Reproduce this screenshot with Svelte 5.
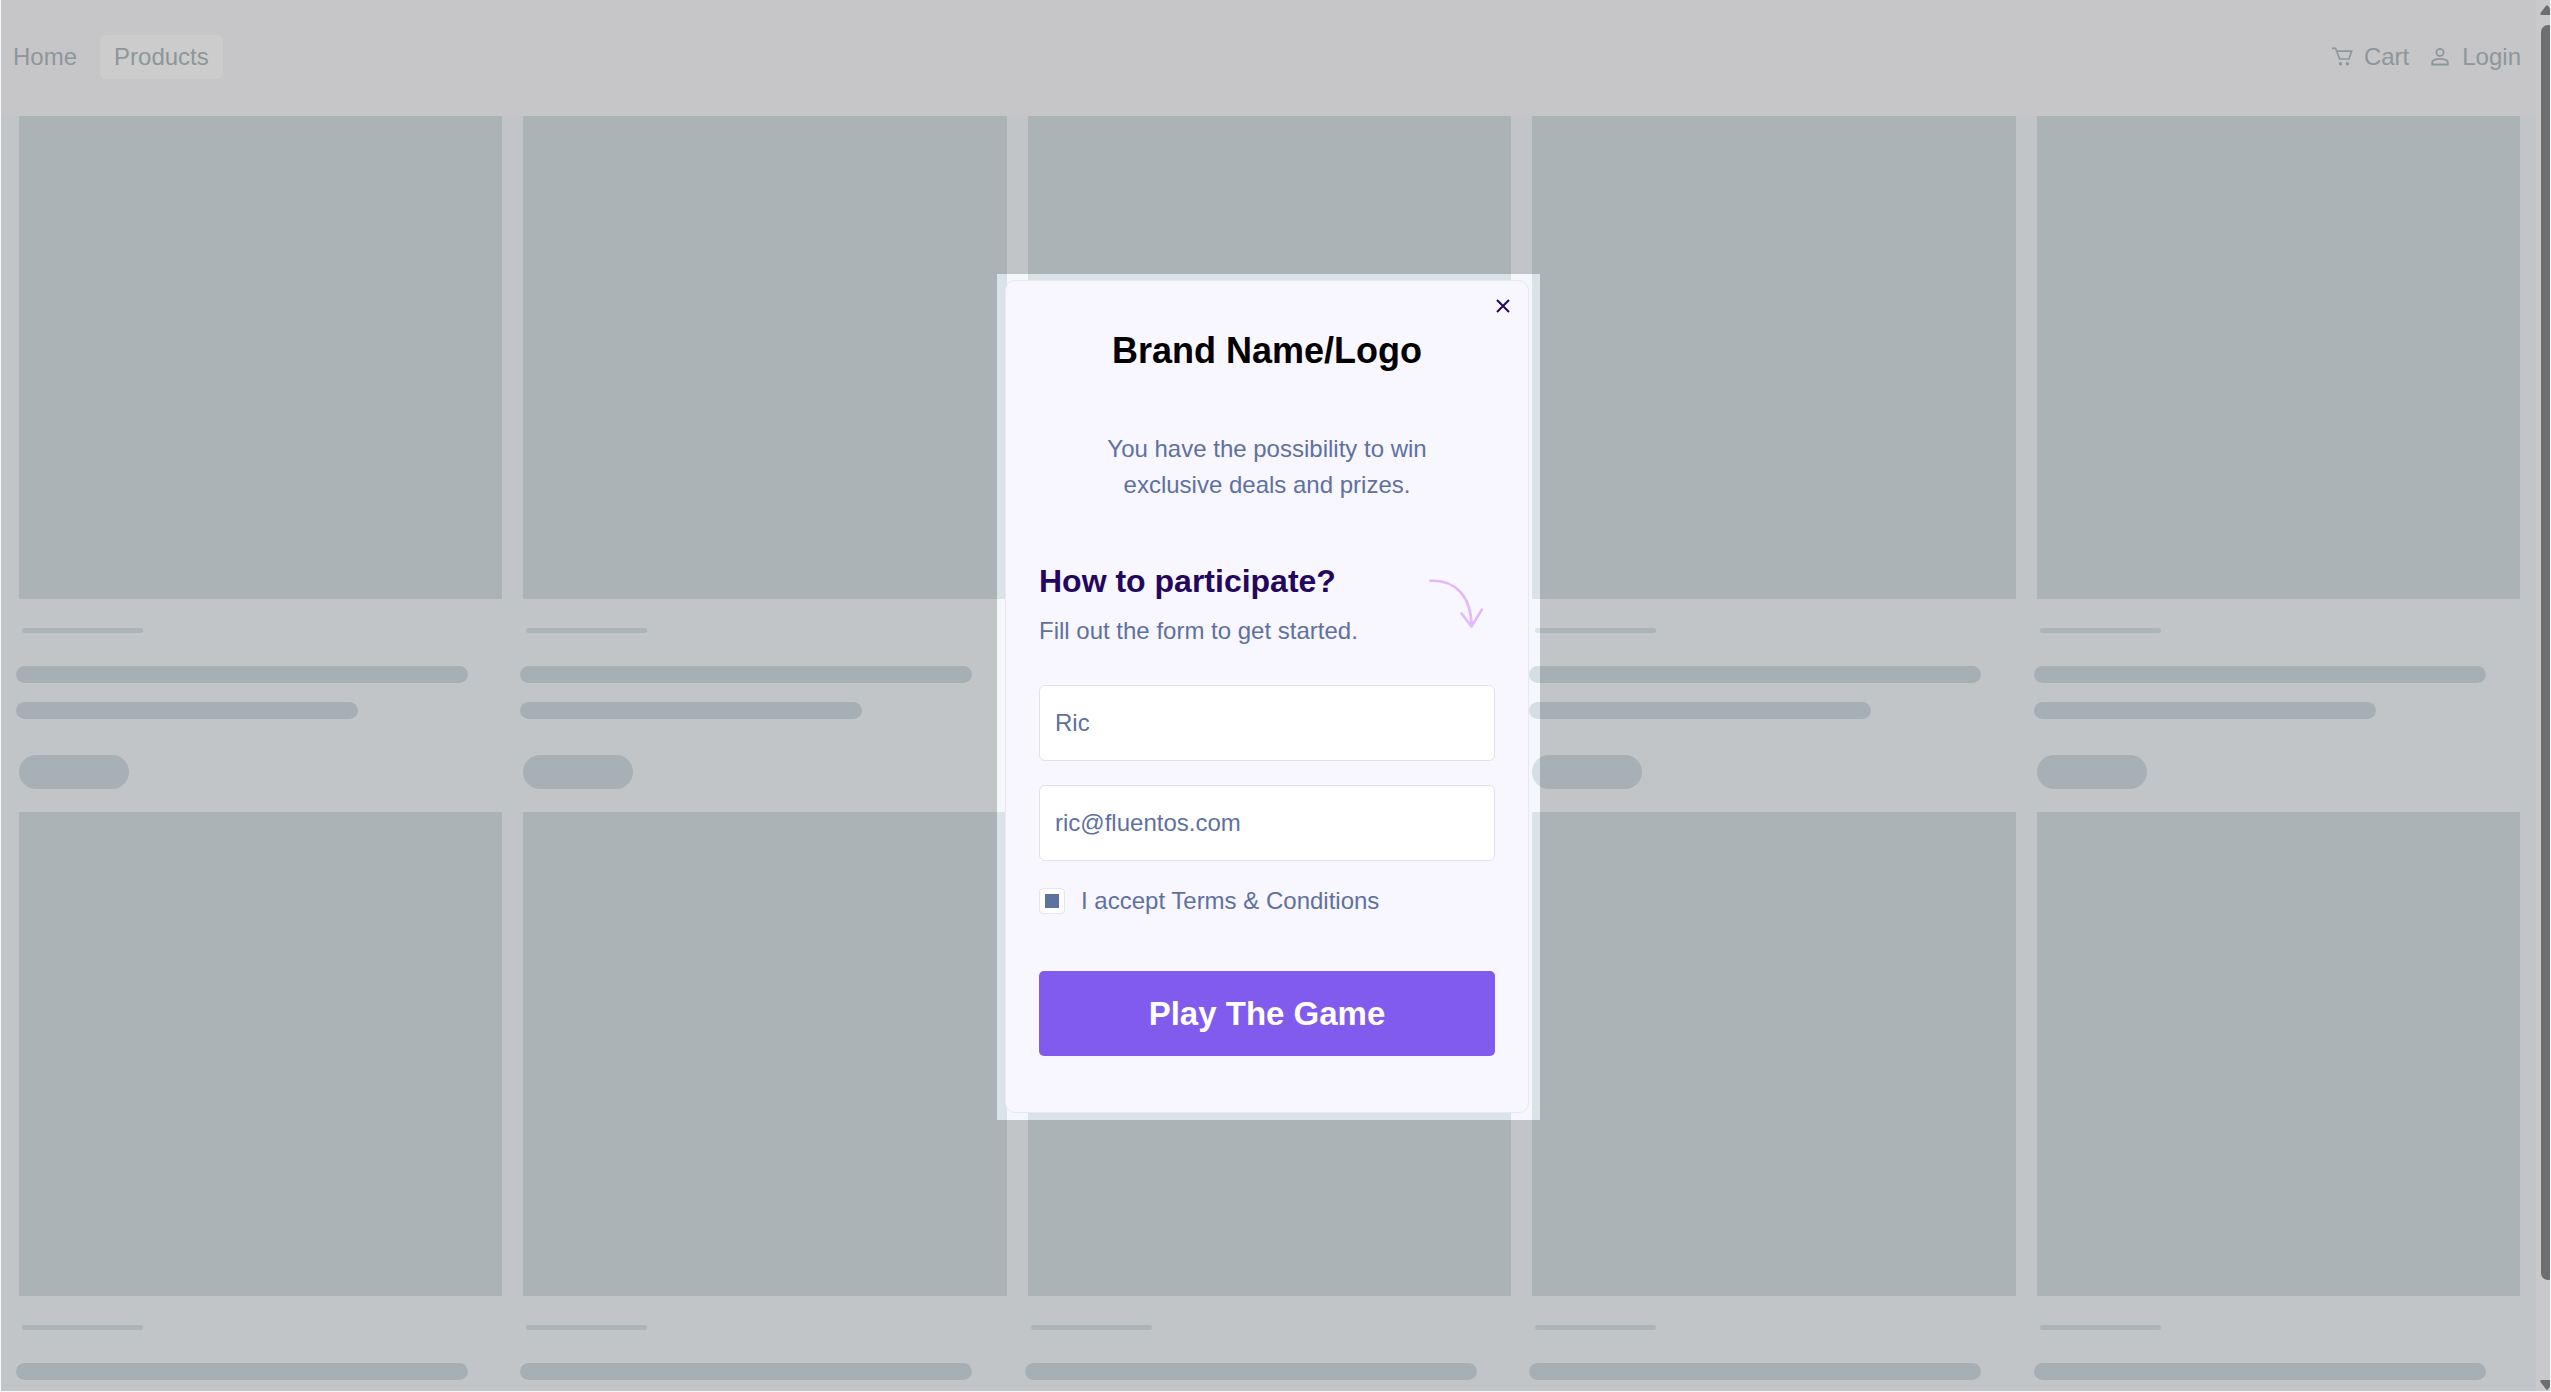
<script>
  let name = $state('Ric');
  let email = $state('ric@fluentos.com');
  let accepted = $state(true);
  let open = $state(true);
  const products = Array.from({ length: 10 }, (_, i) => i);
</script>

<div class="shell">
  <div class="page">
    <header class="bar">
      <nav class="links">
        <a class="link" href="#home">Home</a>
        <a class="link current" href="#products">Products</a>
      </nav>
      <nav class="account">
        <a class="link" href="#cart">
          <svg class="icon" viewBox="0 0 22 22" aria-hidden="true">
            <path d="M1 2.300h3.600l4 10.700h9.400L20.600 5.200H5.700" fill="none" stroke="currentColor" stroke-width="1.700" />
            <circle cx="9.500" cy="17.800" r="1.700" fill="currentColor" />
            <circle cx="16.500" cy="17.800" r="1.700" fill="currentColor" />
          </svg>
          Cart
        </a>
        <a class="link" href="#login">
          <svg class="icon" viewBox="0 0 22 22" aria-hidden="true">
            <circle cx="11" cy="6.400" r="3.600" fill="none" stroke="currentColor" stroke-width="1.800" />
            <path d="M3.200 18.500v-2c0-2.600 4.600-3.700 7.800-3.700s7.800 1.100 7.800 3.700v2z" fill="none" stroke="currentColor" stroke-width="1.800" />
          </svg>
          Login
        </a>
      </nav>
    </header>
    <main class="grid">
      {#each products as id (id)}
        <article class="product">
          <div class="photo"></div>
          <div class="tag"></div>
          <div class="line"></div>
          <div class="line short"></div>
          <div class="pill"></div>
        </article>
      {/each}
    </main>
  </div>

  <div class="scrollbar" aria-hidden="true">
    <svg class="arrow" viewBox="0 0 14 10"><path d="M6 .8q1-1.200 2 0l5.500 7.200q.7 2-1 2h-11q-1.700 0-1-2z" fill="#6e6e6e" /></svg>
    <div class="track"><div class="thumb"></div></div>
    <svg class="arrow" viewBox="0 0 14 10"><path d="M6 9.200q1 1.200 2 0l5.500-7.200q.7-2-1-2h-11q-1.700 0-1 2z" fill="#6e6e6e" /></svg>
  </div>

  {#if open}
    <div class="overlay">
      <div class="frame">
        <div class="dialog" role="dialog" aria-modal="true" aria-labelledby="brand">
          <button class="close" type="button" aria-label="Close" onclick={() => (open = false)}>
            <svg viewBox="0 0 14 14" aria-hidden="true">
              <path d="M1 1l12 12M13 1L1 13" stroke="currentColor" stroke-width="2" />
            </svg>
          </button>
          <h1 class="brand" id="brand">Brand Name/Logo</h1>
          <p class="intro">You have the possibility to win exclusive deals and prizes.</p>
          <div class="how">
            <div>
              <h2 class="title">How to participate?</h2>
              <p class="hint">Fill out the form to get started.</p>
            </div>
            <svg class="curve" viewBox="0 0 54 52" aria-hidden="true">
              <path
                d="M1.500 1.800C27 .5 42.500 18 42.500 47.500M32.500 34.500L42.500 47.500L53 30.500"
                fill="none"
                stroke="#e2bafb"
                stroke-width="2.600"
                stroke-linecap="round"
                stroke-linejoin="round"
              />
            </svg>
          </div>
          <form class="form" onsubmit={(e) => e.preventDefault()}>
            <input class="field" type="text" aria-label="Name" bind:value={name} />
            <input class="field" type="email" aria-label="Email" bind:value={email} />
            <label class="terms">
              <input class="tick" type="checkbox" bind:checked={accepted} />
              I accept Terms &amp; Conditions
            </label>
            <button class="play" type="submit">Play The Game</button>
          </form>
        </div>
      </div>
    </div>
  {/if}
</div>

<style>
  :global(body) {
    background: #f7f8fa;
    font-family: 'Liberation Sans', Arial, sans-serif;
  }

  .shell {
    box-sizing: border-box;
    position: relative;
    display: grid;
    grid-template-columns: 1fr 14px;
    height: 100vh;
    padding: 0 1px 1px;
    overflow: hidden;
    font-size: 24px;
    line-height: 36px;
  }

  .page {
    min-width: 0;
    overflow: hidden;
    background: #f3f7fb;
  }

  .bar {
    box-sizing: border-box;
    display: flex;
    justify-content: space-between;
    align-items: center;
    height: 116px;
    padding: 0 15px 2px 12px;
    background: #f8f8fa;
  }

  .links,
  .account {
    display: flex;
    align-items: center;
    gap: 23px;
  }

  .account {
    gap: 20px;
  }

  .link {
    display: flex;
    align-items: center;
    gap: 11px;
    color: #b0bdc2;
    text-decoration: none;
  }

  .current {
    padding: 4px 14px;
    border-radius: 6px;
    background: #ffffff;
  }

  .icon {
    width: 22px;
    height: 22px;
  }

  .grid {
    display: grid;
    grid-template-columns: repeat(5, 1fr);
    column-gap: 21px;
    padding: 0 16px 0 18px;
  }

  .product {
    padding-bottom: 23px;
  }

  .photo {
    aspect-ratio: 1;
    background: #d6e0e4;
  }

  .tag {
    width: 121px;
    height: 5px;
    margin: 29px 0 33px 3px;
    border-radius: 3px;
    background: #d9e1e5;
  }

  .line {
    width: 452px;
    height: 17px;
    margin: 0 0 19px -3px;
    border-radius: 9px;
    background: #d0dce2;
  }

  .short {
    width: 342px;
    margin-bottom: 36px;
  }

  .pill {
    width: 110px;
    height: 34px;
    border-radius: 17px;
    background: #d0dce3;
  }

  .scrollbar {
    z-index: 2;
    display: flex;
    flex-direction: column;
    align-items: flex-start;
    gap: 10px;
    overflow: hidden;
    padding: 5px 0 1px 4px;
    background: #c9c9cb;
  }

  .arrow {
    flex: none;
    width: 14px;
    height: 10px;
  }

  .track {
    flex: 1;
    width: 14px;
    padding-left: 1px;
  }

  .thumb {
    height: 93.3%;
    border-radius: 7px;
    background: #6e6e6e;
  }

  .overlay {
    position: absolute;
    inset: 0 15px 1px 1px;
    display: flex;
    justify-content: center;
    align-items: center;
    padding-top: 3px;
    overflow: hidden;
  }

  .frame {
    box-sizing: border-box;
    width: 543px;
    padding: 6px 11px 7px 8px;
    background: rgba(255, 255, 255, 0.1);
    box-shadow: 0 0 0 3000px rgba(0, 0, 0, 0.2);
  }

  .dialog {
    box-sizing: border-box;
    position: relative;
    padding: 50px 33px 56px;
    border: 1px solid #ebe6f4;
    border-radius: 10px;
    background: #f8f6fe;
    color: #5f719f;
  }

  .close {
    position: absolute;
    top: 12px;
    right: 12px;
    display: flex;
    padding: 6px;
    border: 0;
    background: none;
    color: #23075e;
  }

  .close svg {
    width: 14px;
    height: 14px;
  }

  .brand {
    margin: 0;
    color: #000000;
    font-size: 36px;
    line-height: 40px;
    text-align: center;
  }

  .intro {
    width: 360px;
    margin: 60px auto 58px;
    text-align: center;
  }

  .how {
    display: flex;
    justify-content: space-between;
    align-items: center;
    padding-right: 12px;
  }

  .title {
    margin: 0 0 12px;
    color: #23075e;
    font-size: 32px;
    line-height: 40px;
  }

  .hint {
    margin: 0;
  }

  .curve {
    width: 54px;
    height: 52px;
  }

  .form {
    display: flex;
    flex-direction: column;
    margin-top: 36px;
  }

  .field {
    box-sizing: border-box;
    height: 76px;
    margin: 0 0 24px;
    padding: 0 15px;
    border: 1px solid #e5dff0;
    border-radius: 6px;
    background: #ffffff;
    color: #5f719f;
    font: inherit;
  }

  .terms {
    display: flex;
    align-items: center;
    gap: 16px;
    margin-bottom: 54px;
    line-height: 32px;
  }

  .tick {
    appearance: none;
    box-sizing: border-box;
    width: 26px;
    height: 26px;
    margin: 0;
    padding: 5px;
    border: 1px solid #e9e4f4;
    border-radius: 4px;
    background: #ffffff;
  }

  .tick:checked {
    background: #5f719f content-box;
    box-shadow: inset 0 0 0 5px #ffffff;
  }

  .play {
    height: 85px;
    border: 0;
    border-radius: 5px;
    background: #805bee;
    color: #ffffff;
    font: bold 33px 'Liberation Sans', Arial, sans-serif;
  }
</style>
